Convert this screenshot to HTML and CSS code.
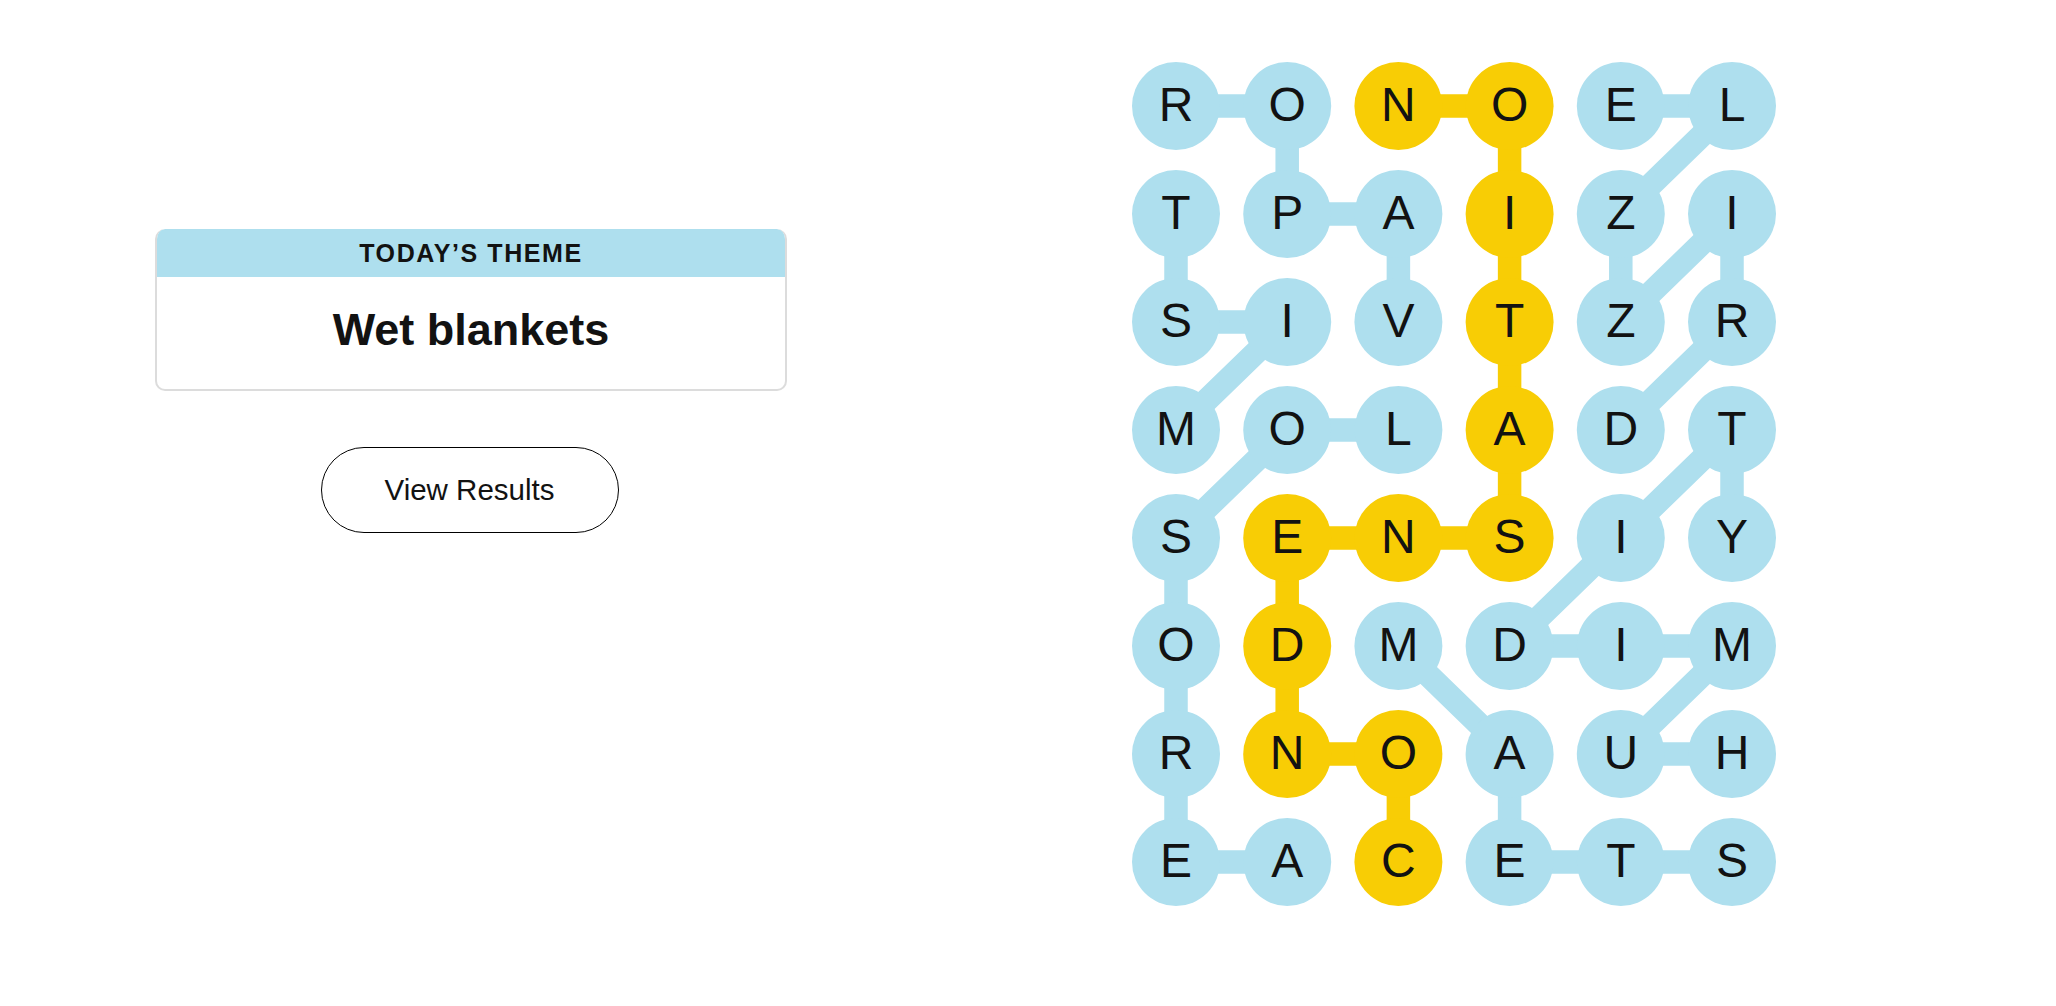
FILE: index.html
```html
<!DOCTYPE html>
<html lang="en">
<head>
<meta charset="utf-8">
<title>Strands</title>
<link rel="stylesheet" href="styles.css">
</head>
<body>
<main class="page">
  <section class="side">
    <div class="theme-card">
      <div class="theme-head">TODAY’S THEME</div>
      <div class="theme-body">Wet blankets</div>
    </div>
    <button class="results-btn" type="button">View Results</button>
  </section>
  <svg class="board" width="644" height="844" viewBox="0 0 644 844" xmlns="http://www.w3.org/2000/svg">
    <g class="links blue-link">
      <polyline points="266.4,260 266.4,152 155.2,152 155.2,44 44,44"/>
      <polyline points="44,368 155.2,260 44,260 44,152"/>
      <polyline points="155.2,800 44,800 44,476 155.2,368 266.4,368"/>
      <polyline points="488.8,368 600,260 600,152 488.8,260 488.8,152 600,44 488.8,44"/>
      <polyline points="600,692 488.8,692 600,584 377.6,584 488.8,476 600,368 600,476"/>
      <polyline points="600,800 377.6,800 377.6,692 266.4,584"/>
    </g>
    <g class="links gold-link">
      <polyline points="266.4,800 266.4,692 155.2,692 155.2,476 377.6,476 377.6,44 266.4,44"/>
    </g>
    <g class="cells">
      <g transform="translate(44,44)"><circle class="c-blue" r="44"/><text y="14.5">R</text></g>
      <g transform="translate(155.2,44)"><circle class="c-blue" r="44"/><text y="14.5">O</text></g>
      <g transform="translate(266.4,44)"><circle class="c-gold" r="44"/><text y="14.5">N</text></g>
      <g transform="translate(377.6,44)"><circle class="c-gold" r="44"/><text y="14.5">O</text></g>
      <g transform="translate(488.8,44)"><circle class="c-blue" r="44"/><text y="14.5">E</text></g>
      <g transform="translate(600,44)"><circle class="c-blue" r="44"/><text y="14.5">L</text></g>

      <g transform="translate(44,152)"><circle class="c-blue" r="44"/><text y="14.5">T</text></g>
      <g transform="translate(155.2,152)"><circle class="c-blue" r="44"/><text y="14.5">P</text></g>
      <g transform="translate(266.4,152)"><circle class="c-blue" r="44"/><text y="14.5">A</text></g>
      <g transform="translate(377.6,152)"><circle class="c-gold" r="44"/><text y="14.5">I</text></g>
      <g transform="translate(488.8,152)"><circle class="c-blue" r="44"/><text y="14.5">Z</text></g>
      <g transform="translate(600,152)"><circle class="c-blue" r="44"/><text y="14.5">I</text></g>

      <g transform="translate(44,260)"><circle class="c-blue" r="44"/><text y="14.5">S</text></g>
      <g transform="translate(155.2,260)"><circle class="c-blue" r="44"/><text y="14.5">I</text></g>
      <g transform="translate(266.4,260)"><circle class="c-blue" r="44"/><text y="14.5">V</text></g>
      <g transform="translate(377.6,260)"><circle class="c-gold" r="44"/><text y="14.5">T</text></g>
      <g transform="translate(488.8,260)"><circle class="c-blue" r="44"/><text y="14.5">Z</text></g>
      <g transform="translate(600,260)"><circle class="c-blue" r="44"/><text y="14.5">R</text></g>

      <g transform="translate(44,368)"><circle class="c-blue" r="44"/><text y="14.5">M</text></g>
      <g transform="translate(155.2,368)"><circle class="c-blue" r="44"/><text y="14.5">O</text></g>
      <g transform="translate(266.4,368)"><circle class="c-blue" r="44"/><text y="14.5">L</text></g>
      <g transform="translate(377.6,368)"><circle class="c-gold" r="44"/><text y="14.5">A</text></g>
      <g transform="translate(488.8,368)"><circle class="c-blue" r="44"/><text y="14.5">D</text></g>
      <g transform="translate(600,368)"><circle class="c-blue" r="44"/><text y="14.5">T</text></g>

      <g transform="translate(44,476)"><circle class="c-blue" r="44"/><text y="14.5">S</text></g>
      <g transform="translate(155.2,476)"><circle class="c-gold" r="44"/><text y="14.5">E</text></g>
      <g transform="translate(266.4,476)"><circle class="c-gold" r="44"/><text y="14.5">N</text></g>
      <g transform="translate(377.6,476)"><circle class="c-gold" r="44"/><text y="14.5">S</text></g>
      <g transform="translate(488.8,476)"><circle class="c-blue" r="44"/><text y="14.5">I</text></g>
      <g transform="translate(600,476)"><circle class="c-blue" r="44"/><text y="14.5">Y</text></g>

      <g transform="translate(44,584)"><circle class="c-blue" r="44"/><text y="14.5">O</text></g>
      <g transform="translate(155.2,584)"><circle class="c-gold" r="44"/><text y="14.5">D</text></g>
      <g transform="translate(266.4,584)"><circle class="c-blue" r="44"/><text y="14.5">M</text></g>
      <g transform="translate(377.6,584)"><circle class="c-blue" r="44"/><text y="14.5">D</text></g>
      <g transform="translate(488.8,584)"><circle class="c-blue" r="44"/><text y="14.5">I</text></g>
      <g transform="translate(600,584)"><circle class="c-blue" r="44"/><text y="14.5">M</text></g>

      <g transform="translate(44,692)"><circle class="c-blue" r="44"/><text y="14.5">R</text></g>
      <g transform="translate(155.2,692)"><circle class="c-gold" r="44"/><text y="14.5">N</text></g>
      <g transform="translate(266.4,692)"><circle class="c-gold" r="44"/><text y="14.5">O</text></g>
      <g transform="translate(377.6,692)"><circle class="c-blue" r="44"/><text y="14.5">A</text></g>
      <g transform="translate(488.8,692)"><circle class="c-blue" r="44"/><text y="14.5">U</text></g>
      <g transform="translate(600,692)"><circle class="c-blue" r="44"/><text y="14.5">H</text></g>

      <g transform="translate(44,800)"><circle class="c-blue" r="44"/><text y="14.5">E</text></g>
      <g transform="translate(155.2,800)"><circle class="c-blue" r="44"/><text y="14.5">A</text></g>
      <g transform="translate(266.4,800)"><circle class="c-gold" r="44"/><text y="14.5">C</text></g>
      <g transform="translate(377.6,800)"><circle class="c-blue" r="44"/><text y="14.5">E</text></g>
      <g transform="translate(488.8,800)"><circle class="c-blue" r="44"/><text y="14.5">T</text></g>
      <g transform="translate(600,800)"><circle class="c-blue" r="44"/><text y="14.5">S</text></g>
    </g>
  </svg>
</main>
</body>
</html>
```

FILE: styles.css
```css
html, body {
  margin: 0;
  padding: 0;
  background: #ffffff;
}

body {
  font-family: "Liberation Sans", Arial, sans-serif;
  color: #121212;
}

.page {
  display: flex;
  align-items: flex-start;
  padding: 62px 0 0 155px;
  gap: 345px;
}

.side {
  width: 632px;
  padding-top: 167px;
  display: flex;
  flex-direction: column;
  align-items: center;
}

.theme-card {
  width: 632px;
  box-sizing: border-box;
  border: 2px solid #dcdcdc;
  border-top: none;
  border-radius: 10px;
  overflow: hidden;
}

.theme-head {
  height: 48px;
  margin: 0 -2px;
  background: #aedfee;
  border-radius: 10px 10px 0 0;
  display: flex;
  align-items: center;
  justify-content: center;
  font-size: 25px;
  font-weight: 700;
  letter-spacing: 1.6px;
  padding-top: 1px;
  box-sizing: border-box;
  color: #121212;
}

.theme-body {
  height: 112px;
  display: flex;
  align-items: center;
  justify-content: center;
  font-size: 45px;
  font-weight: 700;
  letter-spacing: 0;
  color: #121212;
  padding-bottom: 6px;
  box-sizing: border-box;
}

.results-btn {
  margin-top: 56px;
  width: 298px;
  height: 86px;
  border: 1.6px solid #000000;
  border-radius: 43px;
  background: #ffffff;
  font-family: "Liberation Sans", Arial, sans-serif;
  font-size: 29.5px;
  color: #121212;
  padding: 0;
  margin-right: 3px;
}

.board {
  display: block;
  flex: none;
}

.links polyline {
  fill: none;
  stroke-width: 23.5;
  stroke-linejoin: round;
}

.blue-link polyline {
  stroke: #aedfee;
}

.gold-link polyline {
  stroke: #f8cd05;
}

.c-blue {
  fill: #aedfee;
}

.c-gold {
  fill: #f8cd05;
}

.cells text {
  font-family: "Liberation Sans", Arial, sans-serif;
  font-size: 48px;
  fill: #121212;
  text-anchor: middle;
}
```
